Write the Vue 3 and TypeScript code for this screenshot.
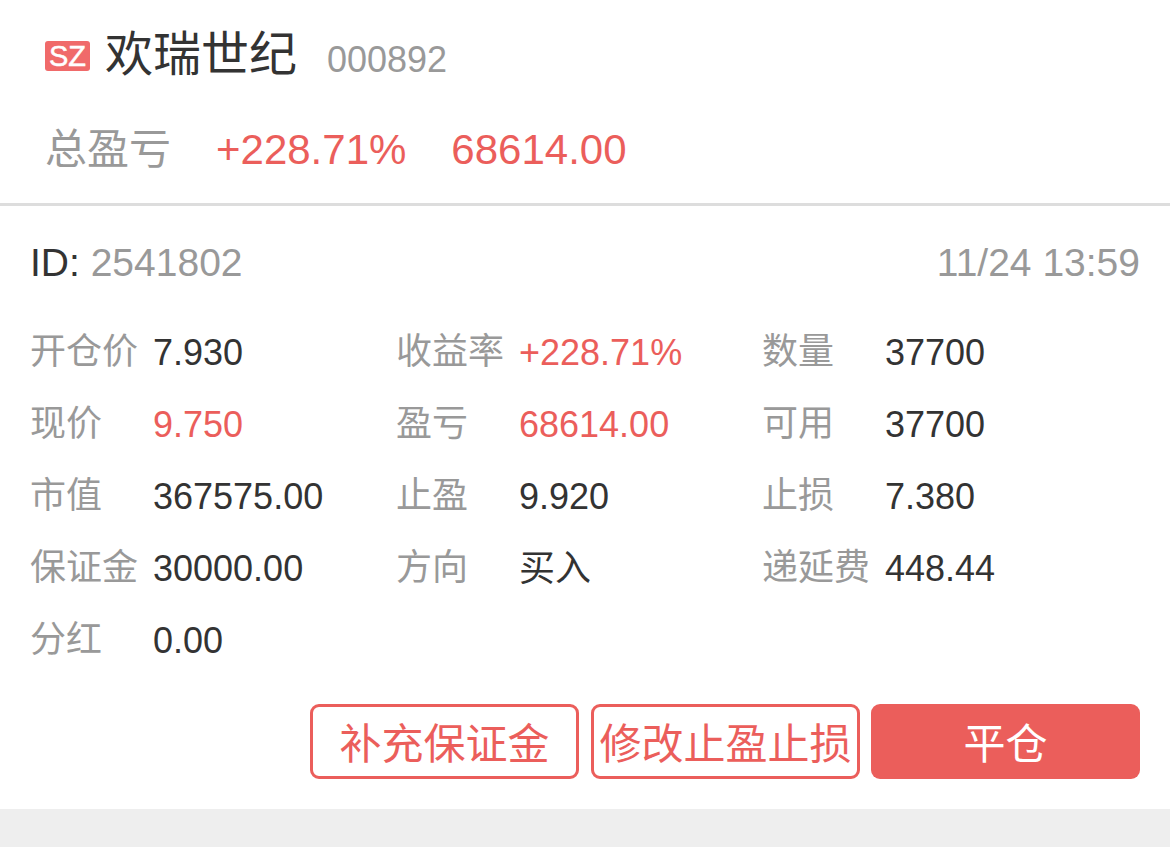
<template>
  <div class="page">
    <section class="card">
      <header class="head">
        <div class="title-row">
          <span class="badge">SZ</span>
          <span class="name">欢瑞世纪</span>
          <span class="code">000892</span>
        </div>
        <div class="total-row">
          <span class="total-label">总盈亏</span>
          <span class="total-rate">+228.71%</span>
          <span class="total-value">68614.00</span>
        </div>
      </header>
      <div class="body">
        <div class="id-row">
          <span class="id"><span class="id-key">ID:</span> 2541802</span>
          <span class="time">11/24 13:59</span>
        </div>
        <div class="grid">
          <div v-for="item in items" :key="item.label" class="cell">
            <span class="label">{{ item.label }}</span>
            <span class="value" :class="{ red: item.red }">{{ item.value }}</span>
          </div>
        </div>
        <div class="actions">
          <button class="btn outline">补充保证金</button>
          <button class="btn outline">修改止盈止损</button>
          <button class="btn solid">平仓</button>
        </div>
      </div>
    </section>
  </div>
</template>

<script setup lang="ts">
interface Item {
  label: string
  value: string
  red?: boolean
}

const items: Item[] = [
  { label: '开仓价', value: '7.930' },
  { label: '收益率', value: '+228.71%', red: true },
  { label: '数量', value: '37700' },
  { label: '现价', value: '9.750', red: true },
  { label: '盈亏', value: '68614.00', red: true },
  { label: '可用', value: '37700' },
  { label: '市值', value: '367575.00' },
  { label: '止盈', value: '9.920' },
  { label: '止损', value: '7.380' },
  { label: '保证金', value: '30000.00' },
  { label: '方向', value: '买入' },
  { label: '递延费', value: '448.44' },
  { label: '分红', value: '0.00' }
]
</script>

<style>
html,
body {
  margin: 0;
  background: #eeeeee;
}
</style>

<style scoped>
.page {
  height: 847px;
  overflow: hidden;
  background: #eeeeee;
  font-family: 'Liberation Sans', 'Noto Sans CJK SC', sans-serif;
  color: #333333;
}
.card {
  background: #ffffff;
  height: 809px;
}
.head {
  height: 177px;
  padding: 26px 0 0 45px;
  border-bottom: 3px solid #dddddd;
}
.title-row {
  display: flex;
  align-items: center;
  height: 58px;
}
.badge {
  width: 45px;
  height: 30px;
  margin-top: 1px;
  border-radius: 3px;
  background: #f06a6a;
  color: #fff;
  font-size: 29px;
  line-height: 30px;
  text-align: center;
  -webkit-text-stroke: 0.5px #fff;
}
.name {
  margin-left: 15px;
  font-size: 48px;
  line-height: 58px;
}
.code {
  margin-left: 30px;
  margin-top: 10px;
  font-size: 36px;
  color: #999999;
}
.total-row {
  display: flex;
  align-items: center;
  height: 50px;
  margin-top: 41px;
  font-size: 42px;
  line-height: 50px;
}
.total-label {
  color: #999999;
  width: 171px;
}
.total-rate,
.total-value {
  color: #eb5e5b;
}
.total-value {
  margin-left: 45px;
}
.body {
  padding: 0 30px;
}
.id-row {
  display: flex;
  justify-content: space-between;
  align-items: center;
  height: 112px;
  padding-top: 1px;
  box-sizing: border-box;
  font-size: 39px;
  color: #999999;
}
.id-key {
  color: #333333;
}
.grid {
  display: grid;
  grid-template-columns: repeat(3, 366px);
  grid-auto-rows: 72px;
}
.cell {
  display: flex;
  align-items: center;
  font-size: 36px;
  line-height: 40px;
}
.label {
  width: 123px;
  flex: none;
  margin-bottom: 4px;
  color: #999999;
  white-space: nowrap;
}
.value {
  margin-bottom: 2px;
  color: #333333;
}
.red {
  color: #eb5e5b;
}
.actions {
  display: flex;
  justify-content: flex-end;
  gap: 12px;
  margin-top: 26px;
}
.btn {
  width: 269px;
  height: 75px;
  margin: 0;
  padding: 0 0 3px;
  box-sizing: border-box;
  border-radius: 9px;
  font-family: inherit;
  font-size: 42px;
  white-space: nowrap;
}
.outline {
  border: 3px solid #eb5e5b;
  background: #ffffff;
  color: #eb5e5b;
}
.solid {
  margin-left: -1px;
  border: 0;
  background: #eb5e5b;
  color: #ffffff;
}
</style>
